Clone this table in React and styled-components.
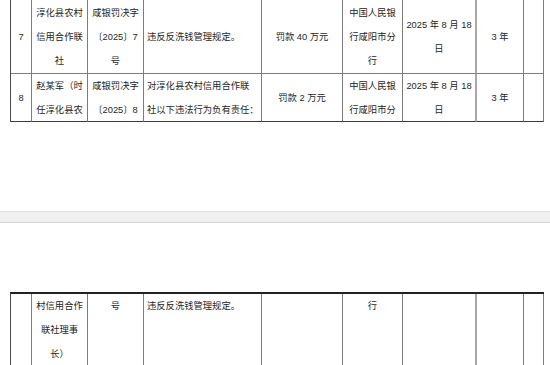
import React from "react";
import styled, { createGlobalStyle } from "styled-components";

const GlobalStyle = createGlobalStyle`
  html, body {
    margin: 0;
    padding: 0;
    background: #fff;
    overflow: hidden;
  }
  body {
    font-family: "Liberation Sans", "Noto Sans CJK SC", sans-serif;
  }
`;

const COLS = "21px 56px 56px 118px 81px 60px 74px 47px 20px";

const Viewer = styled.div`
  width: 550px;
  height: 365px;
  overflow: hidden;
  display: flex;
  flex-direction: column;
`;

const Page = styled.div`
  flex-shrink: 0;
  box-sizing: border-box;
  height: ${(p) => p.$height}px;
  padding-top: ${(p) => p.$top || 0}px;
  background: #fff;
  overflow: hidden;
`;

const PageGap = styled.div`
  flex-shrink: 0;
  box-sizing: border-box;
  height: 12px;
  background: #f0f0f0;
  border-top: 1px solid #e0e0e0;
  border-bottom: 1px solid #d2d2d2;
`;

const Table = styled.div`
  box-sizing: border-box;
  width: 534px;
  margin-left: 10px;
  display: grid;
  grid-template-columns: ${COLS};
  border-left: 1px solid #4a4a4a;
  border-top: ${(p) => (p.$rule ? "2px solid #222" : "none")};
`;

const Cell = styled.div`
  box-sizing: border-box;
  height: ${(p) => p.$h}px;
  padding: ${(p) => p.$padTop || 0}px ${(p) => (p.$left ? "4px 0 3px" : "0")};
  display: flex;
  flex-direction: column;
  justify-content: ${(p) => (p.$top ? "flex-start" : "center")};
  align-items: ${(p) => (p.$left ? "flex-start" : "center")};
  overflow: hidden;
  border-right: ${(p) => (p.$heavy ? "2px solid #a8a8a8" : "1px solid #7c7c7c")};
  border-bottom: ${(p) => p.$bottom || "1px solid #7c7c7c"};
  font-size: 9.3px;
  line-height: 24px;
  color: #262626;
`;

const Line = styled.span`
  display: block;
  white-space: nowrap;
`;

const upperRows = [
  {
    h: 74,
    padTop: 1,
    cells: [
      ["7"],
      ["淳化县农村", "信用合作联", "社"],
      ["咸银罚决字", "〔2025〕7", "号"],
      ["违反反洗钱管理规定。"],
      ["罚款 40 万元"],
      ["中国人民银", "行咸阳市分", "行"],
      ["2025 年 8 月 18", "日"],
      ["3 年"],
      [],
    ],
  },
  {
    h: 48,
    bottom: "1px solid #3a3a3a",
    cells: [
      ["8"],
      ["赵某军（时", "任淳化县农"],
      ["咸银罚决字", "〔2025〕8"],
      ["对淳化县农村信用合作联", "社以下违法行为负有责任："],
      ["罚款 2 万元"],
      ["中国人民银", "行咸阳市分"],
      ["2025 年 8 月 18", "日"],
      ["3 年"],
      [],
    ],
  },
];

const lowerRows = [
  {
    h: 80,
    top: true,
    cells: [
      [],
      ["村信用合作", "联社理事", "长）"],
      ["号"],
      ["违反反洗钱管理规定。"],
      [],
      ["行"],
      [],
      [],
      [],
    ],
  },
];

function Rows({ rows }) {
  return rows.map((row, r) =>
    row.cells.map((lines, c) => (
      <Cell
        key={`${r}-${c}`}
        $h={row.h}
        $padTop={row.padTop}
        $top={row.top}
        $bottom={row.bottom}
        $left={c === 3}
        $heavy={c === 6}
      >
        {lines.map((t, i) => (
          <Line key={i}>{t}</Line>
        ))}
      </Cell>
    ))
  );
}

export default function App() {
  return (
    <>
      <GlobalStyle />
      <Viewer>
        <Page $height={211}>
          <Table>
            <Rows rows={upperRows} />
          </Table>
        </Page>
        <PageGap />
        <Page $height={200} $top={69}>
          <Table $rule>
            <Rows rows={lowerRows} />
          </Table>
        </Page>
      </Viewer>
    </>
  );
}
